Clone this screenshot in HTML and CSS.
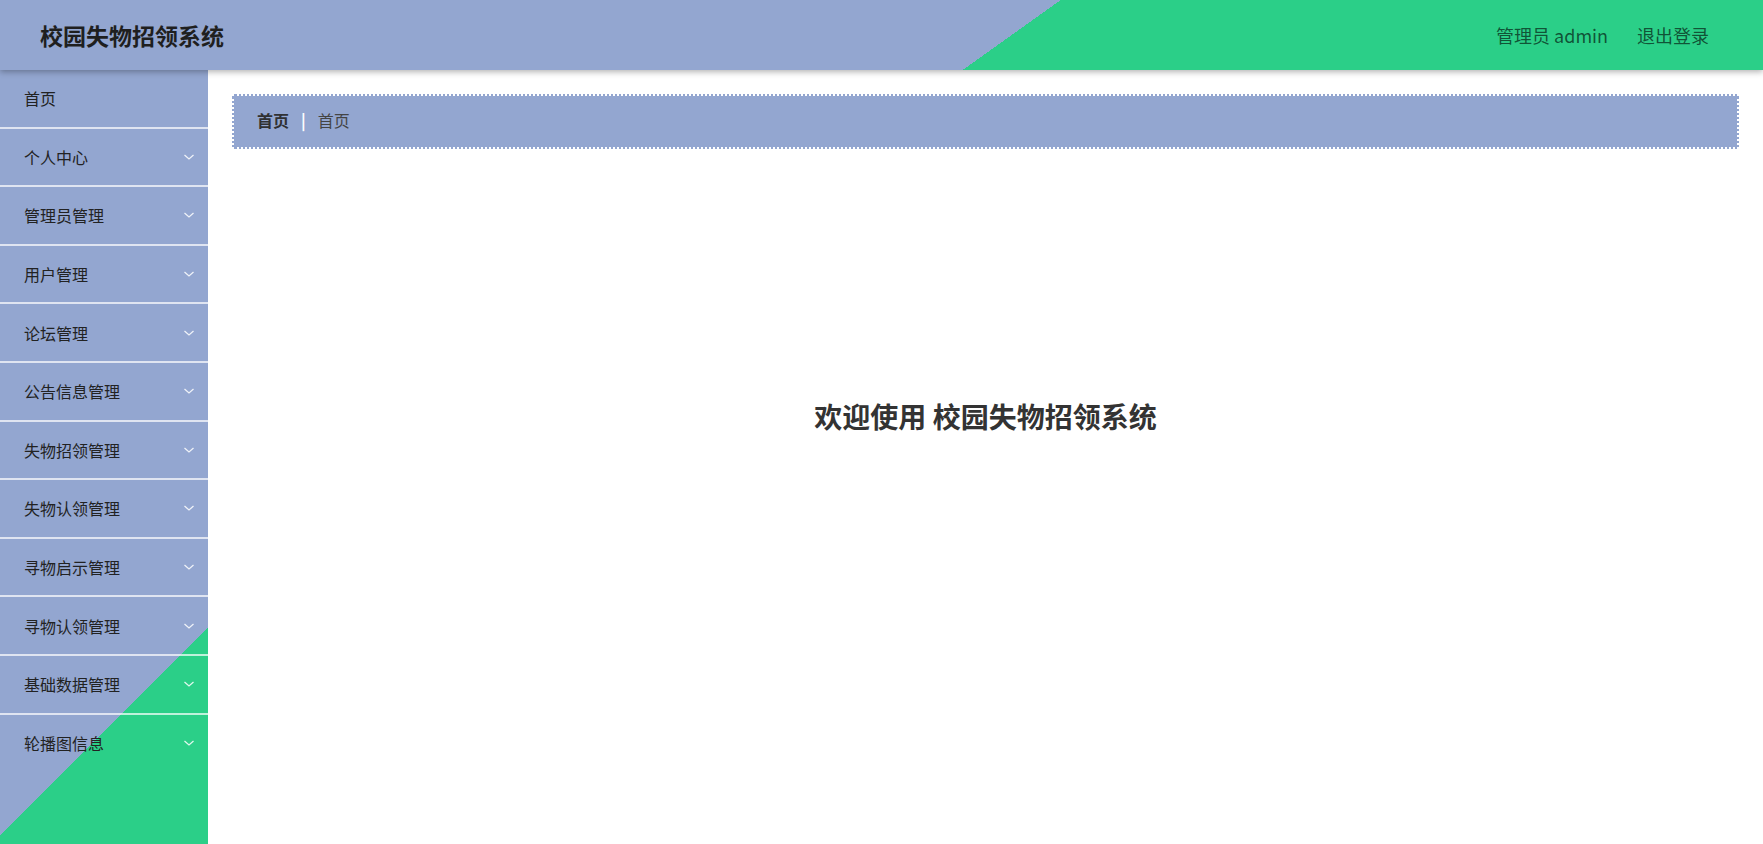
FILE: index.html
```html
<!DOCTYPE html>
<html lang="zh-CN">
<head>
    <meta charset="UTF-8">
    <meta name="viewport" content="width=device-width, initial-scale=1.0">
    <title>校园失物招领系统</title>
    <link rel="stylesheet" href="styles.css">
</head>
<body>
    <header class="topbar">
        <div class="brand">校园失物招领系统</div>
        <div class="user-area">
            <span class="user-name">管理员 admin</span>
            <span class="logout">退出登录</span>
        </div>
    </header>

    <div class="layout">
        <aside class="sidebar">
            <ul class="menu">
                <li class="menu-item">首页</li>
                <li class="menu-item">个人中心<svg class="chevron" viewBox="0 0 12 12"><polyline points="1.5,4 6,8 10.5,4"/></svg></li>
                <li class="menu-item">管理员管理<svg class="chevron" viewBox="0 0 12 12"><polyline points="1.5,4 6,8 10.5,4"/></svg></li>
                <li class="menu-item">用户管理<svg class="chevron" viewBox="0 0 12 12"><polyline points="1.5,4 6,8 10.5,4"/></svg></li>
                <li class="menu-item">论坛管理<svg class="chevron" viewBox="0 0 12 12"><polyline points="1.5,4 6,8 10.5,4"/></svg></li>
                <li class="menu-item">公告信息管理<svg class="chevron" viewBox="0 0 12 12"><polyline points="1.5,4 6,8 10.5,4"/></svg></li>
                <li class="menu-item">失物招领管理<svg class="chevron" viewBox="0 0 12 12"><polyline points="1.5,4 6,8 10.5,4"/></svg></li>
                <li class="menu-item">失物认领管理<svg class="chevron" viewBox="0 0 12 12"><polyline points="1.5,4 6,8 10.5,4"/></svg></li>
                <li class="menu-item">寻物启示管理<svg class="chevron" viewBox="0 0 12 12"><polyline points="1.5,4 6,8 10.5,4"/></svg></li>
                <li class="menu-item">寻物认领管理<svg class="chevron" viewBox="0 0 12 12"><polyline points="1.5,4 6,8 10.5,4"/></svg></li>
                <li class="menu-item">基础数据管理<svg class="chevron" viewBox="0 0 12 12"><polyline points="1.5,4 6,8 10.5,4"/></svg></li>
                <li class="menu-item">轮播图信息<svg class="chevron" viewBox="0 0 12 12"><polyline points="1.5,4 6,8 10.5,4"/></svg></li>
            </ul>
        </aside>

        <main class="content">
            <div class="breadcrumb">
                <span class="crumb-current">首页</span>
                <span class="crumb-sep">|</span>
                <span class="crumb">首页</span>
            </div>
            <h1 class="welcome">欢迎使用 校园失物招领系统</h1>
        </main>
    </div>
</body>
</html>
```

FILE: styles.css
```css
:root {
    --blue: #93a6d0;
    --green: #2bcf88;
    --dark-text: #2b2b2b;
}

body {
    margin: 0;
    font-family: "Noto Sans CJK SC", "Noto Sans", sans-serif;
    color: var(--dark-text);
    background: #ffffff;
    overflow: hidden;
}

.topbar {
    position: relative;
    z-index: 2;
    height: 70px;
    display: flex;
    align-items: center;
    justify-content: space-between;
    padding: 0 54px 0 40px;
    background: linear-gradient(144.5deg, var(--blue) 616px, var(--green) 616px);
    box-shadow: 0 2px 6px rgba(0, 0, 0, 0.3);
}

.brand {
    font-size: 23px;
    font-weight: 700;
    color: #1f1f1f;
}

.user-area {
    display: flex;
    gap: 29px;
    font-size: 18px;
    color: rgba(0, 0, 0, 0.62);
}

.layout {
    display: flex;
    height: calc(100vh - 70px);
}

.sidebar {
    width: 208px;
    flex-shrink: 0;
    background: linear-gradient(135deg, var(--blue) 541px, var(--green) 541px);
}

.menu {
    list-style: none;
    margin: 0;
    padding: 0;
}

.menu-item {
    display: flex;
    align-items: center;
    justify-content: space-between;
    height: 56.6px;
    padding: 0 13px 0 24px;
    font-size: 16px;
    color: #222;
    border-bottom: 2px solid rgba(255, 255, 255, 0.7);
}

.menu-item:last-child {
    border-bottom: none;
}

.chevron {
    width: 12px;
    height: 12px;
    fill: none;
    stroke: rgba(255, 255, 255, 0.85);
    stroke-width: 1.3;
}

.content {
    flex: 1;
    padding: 24px 24px 0 24px;
}

.breadcrumb {
    display: flex;
    align-items: center;
    padding: 0 23px 3px 23px;
    box-sizing: border-box;
    height: 55px;
    background: var(--blue);
    border: 2px dotted #ffffff;
    font-size: 16px;
}

.crumb-current {
    font-weight: 700;
    color: #303133;
}

.crumb-sep {
    margin: 0 12px;
    color: #ffffff;
    font-weight: 700;
}

.crumb {
    color: #444;
}

.welcome {
    margin: 247px 0 0 0;
    text-align: center;
    font-size: 28px;
    line-height: 40px;
    font-weight: 700;
    color: #333;
}
```
